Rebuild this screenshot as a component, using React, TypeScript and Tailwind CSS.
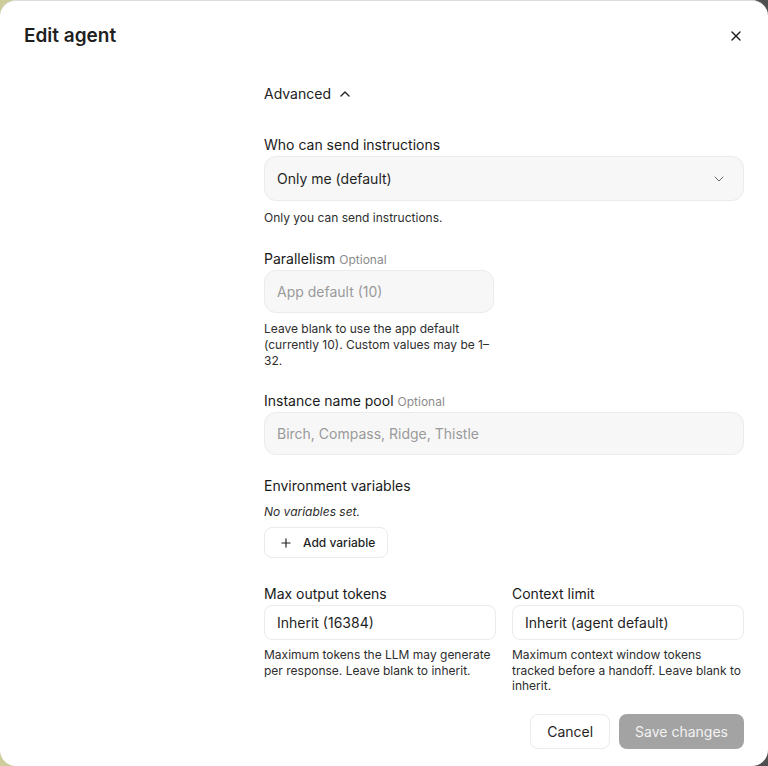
import { ChevronDown, ChevronUp, Plus, X } from 'lucide-react';

function Label({ text, optional }: { text: string; optional?: boolean }) {
    return (
        <div className="mb-px h-5 text-[14px] leading-5 font-normal text-[#1a1a1a]">
            {text}
            {optional && <span className="ml-1 text-[12px] text-[#8c8c8c]">Optional</span>}
        </div>
    );
}

function Help({ children, className = '' }: { children: React.ReactNode; className?: string }) {
    return <p className={`text-[12px] leading-4 text-[#2e2e2e] ${className}`}>{children}</p>;
}

export default function App() {
    return (
        <div
            className="relative h-[766px] w-[768px] overflow-hidden bg-[linear-gradient(90deg,#cdcd9c_0%,#b8bcae_30%,#9aa2a3_60%,#4f4f4f_95%)]"
            style={{ fontFamily: 'Inter, "Noto Sans", sans-serif' }}
        >
            <div className="flex h-full w-full flex-col rounded-[16px] border-t border-[#dcdcdc] bg-white">
                {/* Header */}
                <div className="flex items-center justify-between px-6 pt-[23px]">
                    <h1 className="text-[19px] leading-6 font-semibold text-[#1f1f1f]">Edit agent</h1>
                    <button className="text-[#222]">
                        <X className="h-4 w-4" strokeWidth={2} />
                    </button>
                </div>

                <div className="flex px-6">
                    <div className="w-[240px] shrink-0" />
                    <div className="flex w-[480px] flex-col">
                        <button className="mt-[36px] flex items-center gap-1.5 text-[14px] leading-5 text-[#222]">
                            Advanced
                            <ChevronUp className="h-4 w-4" strokeWidth={2} />
                        </button>

                        {/* Who can send instructions */}
                        <div className="mt-[31px]">
                            <Label text="Who can send instructions" />
                            <div className="flex h-[45px] items-center justify-between rounded-xl border border-[#ebebeb] bg-[#f7f7f7] pr-4 pl-[12px] text-[14px] text-[#1f1f1f]">
                                <span>Only me (default)</span>
                                <ChevronDown className="h-4 w-4 text-[#666]" strokeWidth={1.5} />
                            </div>
                            <Help className="mt-[9px]">Only you can send instructions.</Help>
                        </div>

                        {/* Parallelism */}
                        <div className="mt-[23px] w-[230px]">
                            <Label text="Parallelism" optional />
                            <div className="flex h-[43px] items-center rounded-xl border border-[#ebebeb] bg-[#f7f7f7] px-[12px] text-[14px] text-[#9a9a9a]">
                                App default (10)
                            </div>
                            <Help className="mt-[8px]">
                                Leave blank to use the app default (currently 10). Custom values may be 1–32.
                            </Help>
                        </div>

                        {/* Instance name pool */}
                        <div className="mt-[22px]">
                            <Label text="Instance name pool" optional />
                            <div className="flex h-[43px] items-center rounded-xl border border-[#ebebeb] bg-[#f7f7f7] px-[12px] text-[14px] text-[#9a9a9a]">
                                Birch, Compass, Ridge, Thistle
                            </div>
                        </div>

                        {/* Environment variables */}
                        <div className="mt-[21px]">
                            <Label text="Environment variables" />
                            <p className="mt-[8px] text-[12px] leading-4 text-[#2e2e2e] italic">No variables set.</p>
                            <button className="mt-[7px] flex h-[31px] w-[124px] items-center gap-[10px] rounded-lg border border-[#ebebeb] bg-white pl-[14px] text-[12px] font-medium text-[#1f1f1f]">
                                <Plus className="h-[14px] w-[14px]" strokeWidth={2} />
                                Add variable
                            </button>
                        </div>

                        {/* Token limits */}
                        <div className="mt-[26px] grid grid-cols-2 gap-4">
                            <div>
                                <Label text="Max output tokens" />
                                <div className="flex h-[35px] items-center rounded-lg border border-[#ebebeb] bg-white px-[12px] text-[14px] text-[#1f1f1f]">
                                    Inherit (16384)
                                </div>
                                <Help className="mt-[7px] leading-[15.5px]">
                                    Maximum tokens the LLM may generate per response. Leave blank to inherit.
                                </Help>
                            </div>
                            <div>
                                <Label text="Context limit" />
                                <div className="flex h-[35px] items-center rounded-lg border border-[#ebebeb] bg-white px-[12px] text-[14px] text-[#1f1f1f]">
                                    Inherit (agent default)
                                </div>
                                <Help className="mt-[7px] leading-[15.5px]">
                                    Maximum context window tokens tracked before a handoff. Leave blank to inherit.
                                </Help>
                            </div>
                        </div>

                        {/* Footer */}
                        <div className="mt-[20px] flex justify-end gap-[9px]">
                            <button className="h-[35px] rounded-lg border border-[#ebebeb] bg-white px-4 text-[14px] text-[#1f1f1f]">
                                Cancel
                            </button>
                            <button className="h-[35px] rounded-lg bg-[#a3a3a3] px-4 text-[14px] text-[#f2f2f2]">
                                Save changes
                            </button>
                        </div>
                    </div>
                </div>
            </div>
        </div>
    );
}
